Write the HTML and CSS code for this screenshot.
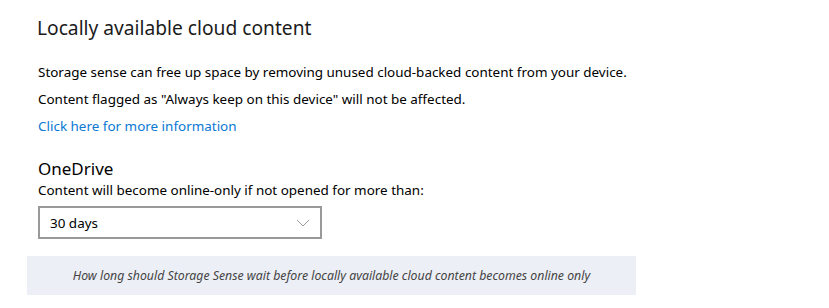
FILE: index.html
```html
<!DOCTYPE html>
<html>
<head>
<meta charset="utf-8">
<link rel="stylesheet" href="styles.css">
</head>
<body>
<div class="page">
  <h1 class="title">Locally available cloud content</h1>
  <p class="line first">Storage sense can free up space by removing unused cloud-backed content from your device.</p>
  <p class="line">Content flagged as "Always keep on this device" will not be affected.</p>
  <a class="line link" href="#">Click here for more information</a>
  <h2 class="sub">OneDrive</h2>
  <p class="label">Content will become online-only if not opened for more than:</p>
  <div class="select">
    <span>30 days</span>
    <svg class="chev" width="14" height="8" viewBox="0 0 14 8"><path d="M1 1 L7 7 L13 1" fill="none" stroke="#999" stroke-width="1"/></svg>
  </div>
  <div class="note">How long should Storage Sense wait before locally available cloud content becomes online only</div>
</div>
</body>
</html>
```
FILE: styles.css
```css
html, body { margin: 0; padding: 0; background: #fff; }
body { font-family: "Noto Sans", "Open Sans", sans-serif; color: #000; }
.page { padding: 14px 0 0 27px; display: flex; flex-direction: column; align-items: flex-start; }
.title { font-size: 19.2px; font-weight: 400; margin: 0 0 0 10px; line-height: 28px; color: #1b1b1b; }
.line { font-size: 13.45px; line-height: 27px; margin: 0 0 0 11px; }
.first { margin-top: 17px; }
.link { color: #0a78d4; text-decoration: none; }
.sub { font-size: 17px; font-weight: 400; margin: 17px 0 0 11px; line-height: 24px; }
.label { font-size: 13.45px; margin: 1px 0 0 11px; line-height: 17px; }
.select { margin: 7px 0 0 11px; width: 260px; height: 29px; border: 2px solid #999; display: flex; align-items: center; justify-content: space-between; padding: 0 10px 0 10px; font-size: 13.45px; }
.note { margin-top: 17px; width: 609px; height: 39px; background: #eceff6; font-style: italic; font-size: 12.3px; color: #444; display: flex; align-items: center; justify-content: center; }
```
